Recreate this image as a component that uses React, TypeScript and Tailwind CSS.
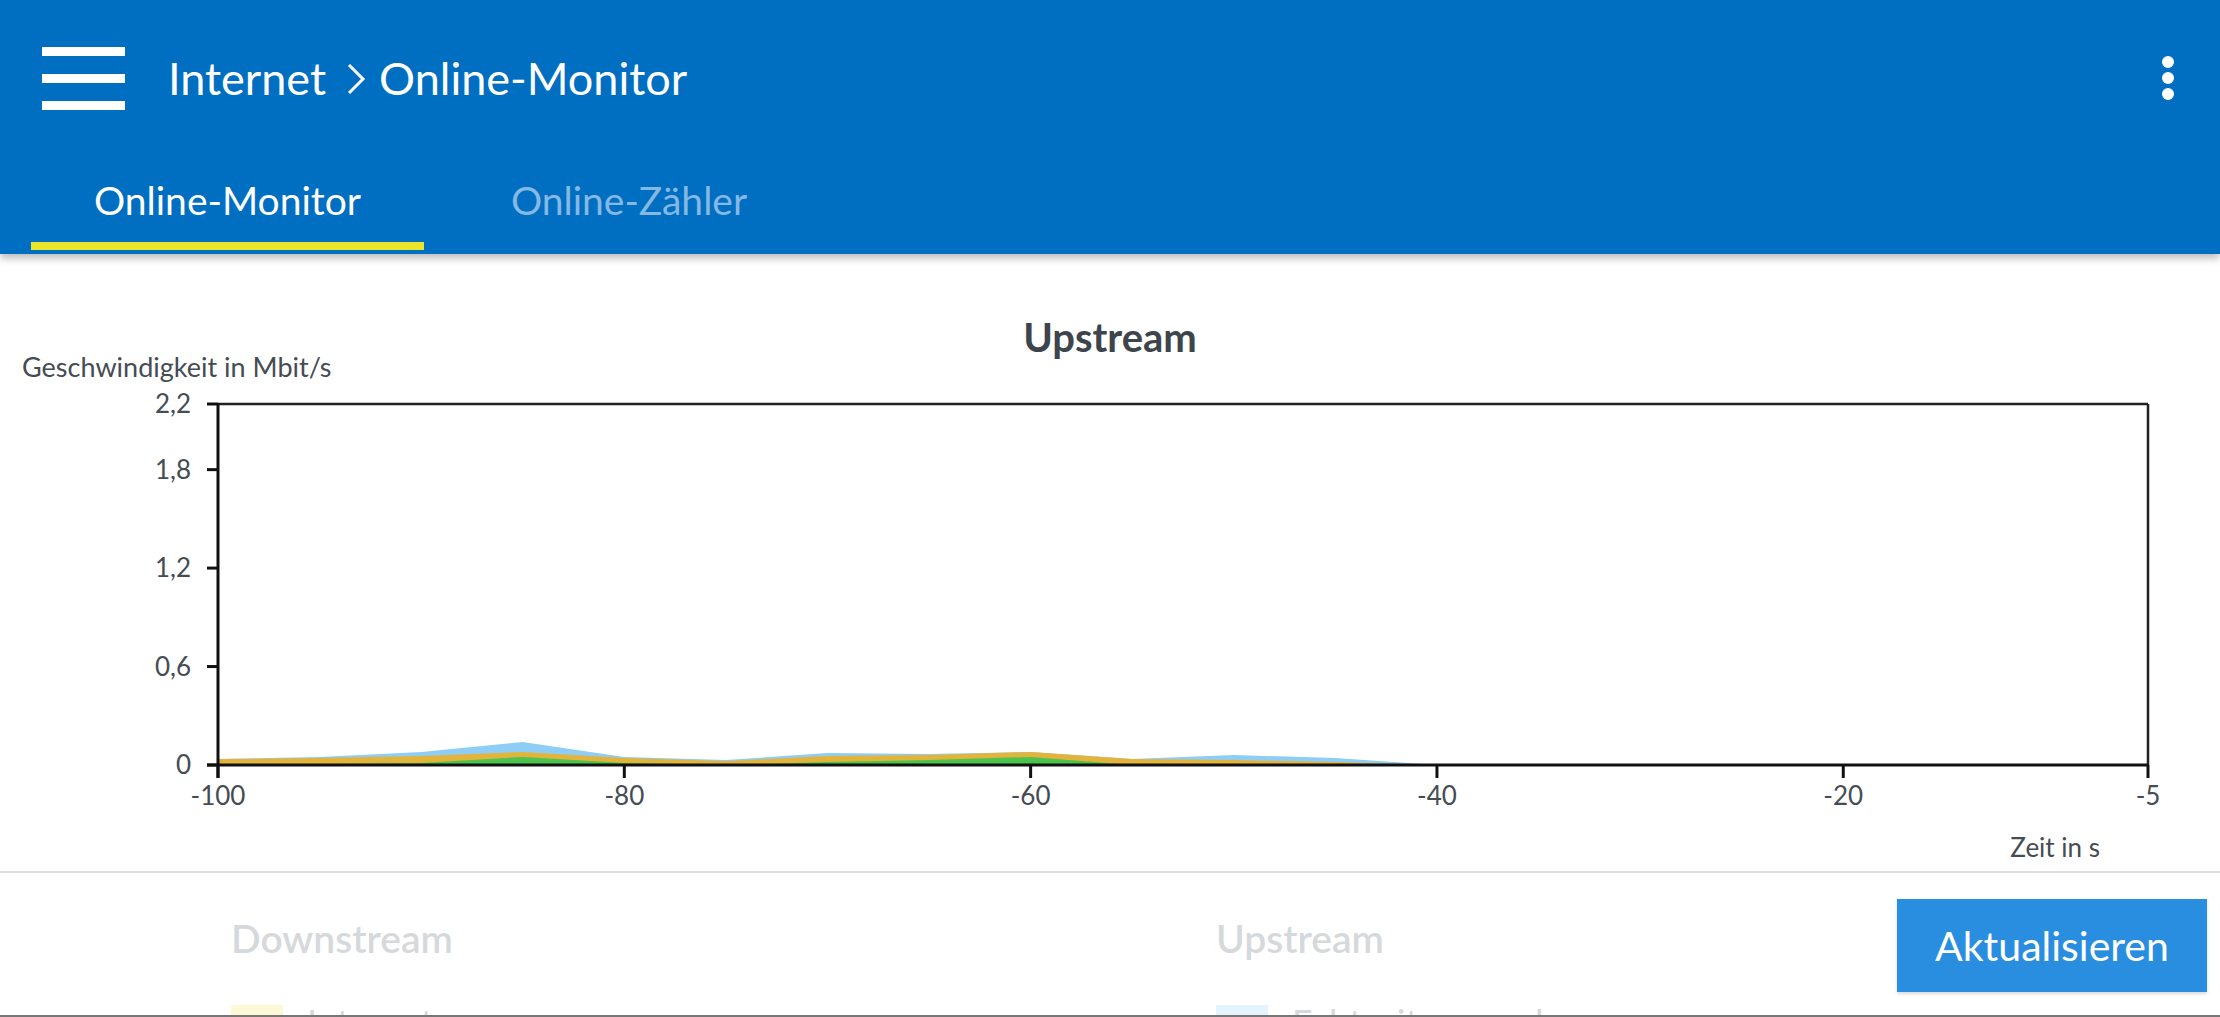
import React from "react";

// stacked values in px above the baseline: [t, green, green+orange, total]
const samples: [number, number, number, number][] = [
    [-100, 0, 6, 6],
    [-95, 1, 7, 8],
    [-90, 2, 9, 13],
    [-85, 8, 13, 23],
    [-80, 2, 7, 8],
    [-75, 0, 4, 5],
    [-70, 3, 9, 12],
    [-65, 5, 10, 11],
    [-60, 8, 13, 13],
    [-55, 0, 6, 6],
    [-50, 1, 5, 10],
    [-45, 0, 3, 7],
    [-40, 0, 0, 0],
];

const X0 = 218;
const X1 = 2148;
const TOP = 28;
const BASE = 389;

const xOf = (t: number) => X0 + ((t + 100) / 95) * (X1 - X0);
const yOf = (mbit: number) => BASE - (mbit / 2.2) * (BASE - TOP);

const areaPath = (idx: 1 | 2 | 3) => {
    const pts = samples.map((s) => `${xOf(s[0]).toFixed(1)},${BASE - s[idx]}`);
    return `M${xOf(-100)},${BASE} L${pts.join(" L")} L${xOf(-40)},${BASE} Z`;
};

const yTicks = [
    { v: 2.2, label: "2,2" },
    { v: 1.8, label: "1,8" },
    { v: 1.2, label: "1,2" },
    { v: 0.6, label: "0,6" },
    { v: 0, label: "0" },
];

const xTicks = [-100, -80, -60, -40, -20, -5];

const Chart: React.FC = () => (
    <svg width="2220" height="495" viewBox="0 0 2220 495" className="block">
        <path d={areaPath(3)} fill="#8ecdf6" />
        <path d={areaPath(2)} fill="#e2b43c" />
        <path d={areaPath(1)} fill="#4cc34c" />

        {/* frame */}
        <line x1={X0} y1={TOP} x2={X1} y2={TOP} stroke="#222" strokeWidth="2.5" />
        <line x1={X1} y1={TOP} x2={X1} y2={BASE} stroke="#222" strokeWidth="2.5" />
        <line x1={X0} y1={TOP - 1} x2={X0} y2={BASE + 13} stroke="#111" strokeWidth="3" />
        <line x1={X0 - 11} y1={BASE} x2={X1} y2={BASE} stroke="#111" strokeWidth="3" />

        {yTicks.map((t) => (
            <g key={t.label}>
                <line x1={X0 - 11} y1={yOf(t.v)} x2={X0} y2={yOf(t.v)} stroke="#111" strokeWidth="3" />
                <text
                    x={191}
                    y={yOf(t.v) + 9}
                    textAnchor="end"
                    fontSize="26"
                    fill="#454c53"
                    fontFamily="Lato, sans-serif"
                >
                    {t.label}
                </text>
            </g>
        ))}

        {xTicks.map((t) => (
            <g key={t}>
                <line x1={xOf(t)} y1={BASE} x2={xOf(t)} y2={BASE + 13} stroke="#111" strokeWidth="3" />
                <text
                    x={xOf(t)}
                    y={429}
                    textAnchor="middle"
                    fontSize="26"
                    fill="#454c53"
                    fontFamily="Lato, sans-serif"
                >
                    {t}
                </text>
            </g>
        ))}

        <text x={2100} y={481} textAnchor="end" fontSize="26" fill="#454c53" fontFamily="Lato, sans-serif">
            Zeit in s
        </text>
    </svg>
);

export default function App() {
    return (
        <div className="w-[2220px] h-[1017px] overflow-hidden bg-white flex flex-col font-['Lato',sans-serif]">
            {/* app bar */}
            <header className="relative z-10 h-[254px] shrink-0 bg-[#006ec1] shadow-[0_4px_8px_rgba(0,0,0,0.28)] flex flex-col">
                <div className="h-[156px] flex items-center pl-[42px] pr-[46px]">
                    <div className="w-[83px] flex flex-col gap-[18px] mt-[1px]">
                        <span className="block h-[9px] bg-white" />
                        <span className="block h-[9px] bg-white" />
                        <span className="block h-[9px] bg-white" />
                    </div>
                    <div className="ml-[43px] flex items-center text-white text-[45px] leading-none">
                        <span>Internet</span>
                        <svg width="20" height="32" viewBox="0 0 20 32" className="ml-[20px] mr-[13px] mt-[2px]">
                            <path d="M3 2 L17 16 L3 30" fill="none" stroke="white" strokeWidth="3" />
                        </svg>
                        <span>Online-Monitor</span>
                    </div>
                    <div className="ml-auto flex flex-col gap-[4px]">
                        <span className="block w-[12px] h-[12px] rounded-full bg-white" />
                        <span className="block w-[12px] h-[12px] rounded-full bg-white" />
                        <span className="block w-[12px] h-[12px] rounded-full bg-white" />
                    </div>
                </div>
                <div className="h-[98px] flex pl-[31px]">
                    <div className="w-[393px] flex flex-col">
                        <div className="flex-1 flex items-center justify-center text-white text-[39px] pt-[2px]">
                            Online-Monitor
                        </div>
                        <div className="h-[8px] mb-[4px] bg-[#e9e52a]" />
                    </div>
                    <div className="w-[410px] flex flex-col">
                        <div className="flex-1 flex items-center justify-center text-[#85b8e3] text-[39px] pt-[2px]">
                            Online-Zähler
                        </div>
                        <div className="h-[8px] mb-[4px]" />
                    </div>
                </div>
            </header>

            {/* chart */}
            <section className="shrink-0 border-b-2 border-[#dedede]">
                <h2 className="mt-[63px] h-[40px] leading-[40px] text-center text-[40px] font-bold text-[#3d444b]">
                    Upstream
                </h2>
                <p className="pl-[22px] h-[19px] leading-[19px] text-[27px] text-[#454c53]">
                    Geschwindigkeit in Mbit/s
                </p>
                <Chart />
            </section>

            {/* legend + button */}
            <section className="flex-1 min-h-0 overflow-hidden flex">
                <div className="w-[985px] pl-[231px] pt-[45px] box-content">
                    <h3 className="h-[40px] leading-[40px] text-[39px] font-semibold text-[#d6d9dc]">Downstream</h3>
                    <div className="mt-[47px] flex items-start gap-[24px]">
                        <span className="block w-[52px] h-[52px] bg-[#fdf8d6]" />
                        <span className="-mt-[3px] text-[36px] leading-[40px] text-[#d6d9dc]">Internet</span>
                    </div>
                </div>
                <div className="w-[681px] pt-[45px]">
                    <h3 className="h-[40px] leading-[40px] text-[39px] font-semibold text-[#d6d9dc]">Upstream</h3>
                    <div className="mt-[47px] flex items-start gap-[24px]">
                        <span className="block w-[52px] h-[52px] bg-[#e4f3fd]" />
                        <span className="-mt-[3px] text-[36px] leading-[40px] text-[#d6d9dc]">Echtzeitanwendungen</span>
                    </div>
                </div>
                <button className="mt-[26px] w-[310px] h-[93px] bg-[#2a8ee0] text-white text-[41px] shadow-[0_2px_3px_rgba(0,0,0,0.15)]">
                    Aktualisieren
                </button>
            </section>
            <div className="h-[2px] shrink-0 bg-[#777]" />
        </div>
    );
}
